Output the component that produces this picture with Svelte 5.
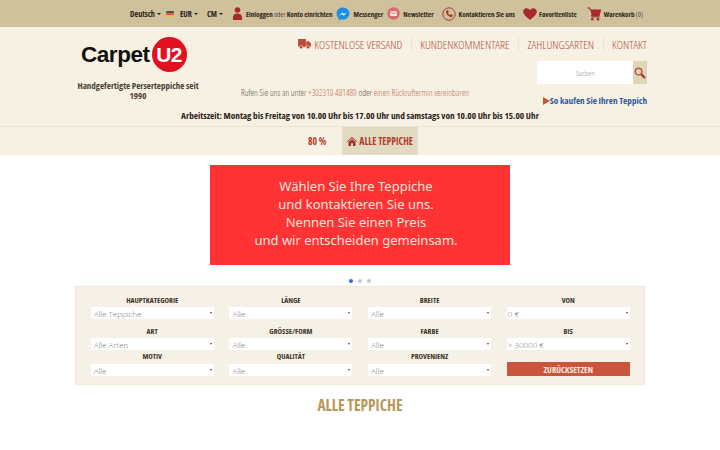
<script lang="ts">
	const topLinks = [
		{ icon: 'messenger', label: 'Messenger' },
		{ icon: 'mail', label: 'Newsletter' },
		{ icon: 'phone', label: 'Kontaktieren Sie uns' },
		{ icon: 'heart', label: 'Favoritenliste' }
	];
	const navLinks = ['KUNDENKOMMENTARE', 'ZAHLUNGSARTEN', 'KONTAKT'];
	const filters = [
		{ label: 'HAUPTKATEGORIE', value: 'Alle Teppiche' },
		{ label: 'LÄNGE', value: 'Alle' },
		{ label: 'BREITE', value: 'Alle' },
		{ label: 'VON', value: '0 €' },
		{ label: 'ART', value: 'Alle Arten' },
		{ label: 'GRÖSSE/FORM', value: 'Alle' },
		{ label: 'FARBE', value: 'Alle' },
		{ label: 'BIS', value: '> 30000 €' },
		{ label: 'MOTIV', value: 'Alle' },
		{ label: 'QUALITÄT', value: 'Alle' },
		{ label: 'PROVENIENZ', value: 'Alle' }
	];
</script>

<div class="page">
	<div class="topbar">
		<span class="drop">Deutsch<i class="caret"></i></span>
		<svg class="flag" width="8" height="6" viewBox="0 0 9 7"><rect width="9" height="2.4" fill="#555"/><rect y="2.3" width="9" height="2.4" fill="#d9534f"/><rect y="4.6" width="9" height="2.4" fill="#e8c04a"/></svg>
		<span class="drop">EUR<i class="caret"></i></span>
		<span class="drop cm">CM<i class="caret"></i></span>
		<span class="link login">
			<svg width="9" height="13" viewBox="0 0 9 13"><circle cx="4.500" cy="3" r="2.800" fill="#a9282a"/><path d="M0 13v-2.500c0-2.500 1.800-4 4.500-4s4.500 1.500 4.500 4V13z" fill="#a9282a"/></svg>
			<span>Einloggen <em>oder</em> Konto einrichten</span>
		</span>
		{#each topLinks as link}
			<span class="link {link.icon}">
				{#if link.icon === 'messenger'}
					<svg width="14" height="14" viewBox="0 0 14 14"><path d="M7 .5C3.300.5.500 3.200.500 6.600c0 1.900.9 3.500 2.300 4.600v2.300l2.200-1.200c.6.200 1.300.3 2 .3 3.700 0 6.500-2.700 6.500-6S10.700.5 7 .5z" fill="#1f8ce6"/><path d="M3.300 8.700 6.300 5.500l1.600 1.600 2.900-1.600-3 3.200-1.600-1.600z" fill="#fff"/></svg>
				{:else if link.icon === 'mail'}
					<svg width="13" height="13" viewBox="0 0 13 13"><circle cx="6.500" cy="6.500" r="6.200" fill="#d96a6a"/><rect x="3" y="4" width="7" height="5" rx="1" fill="#f7e4dc"/><path d="M3.300 4.600 6.500 7l3.200-2.400" fill="none" stroke="#d96a6a" stroke-width=".8"/></svg>
				{:else if link.icon === 'phone'}
					<svg width="14" height="14" viewBox="0 0 14 14"><circle cx="7" cy="7" r="6.200" fill="none" stroke="#a9382f" stroke-width="1"/><path d="M4.600 3.400 6 3l.9 2-.9.800c.3.900 1.100 1.800 2 2.200l.8-.9 2 1-.4 1.400c-.3.600-1 .8-1.700.6C6.300 9.500 4.500 7.500 4 5.300c-.1-.8.100-1.500.6-1.900z" fill="#a9382f"/></svg>
				{:else}
					<svg width="14" height="12" viewBox="0 0 14 12"><path d="M7 12C3.500 9 .2 6.800.2 3.600.2 1.500 1.800.2 3.500.2 5 .2 6.300 1 7 2.200 7.700 1 9 .2 10.500.2c1.700 0 3.300 1.300 3.300 3.400C13.800 6.800 10.500 9 7 12z" fill="#a9282a"/></svg>
				{/if}
				<span>{link.label}</span>
			</span>
		{/each}
		<span class="link cart">
			<svg width="14" height="14" viewBox="0 0 14 14"><path d="M.5 1h2.200l.6 2H13.500l-1.500 5.600H4.700l.4 1.400h7.400" fill="none" stroke="#a9282a" stroke-width="1.100"/><path d="M3.400 3h10.100l-1.500 5.600H4.800z" fill="#a9282a"/><circle cx="5.300" cy="12.300" r="1.300" fill="#a9282a"/><circle cx="11" cy="12.300" r="1.300" fill="#a9282a"/></svg>
			<span>Warenkorb <em>(0)</em></span>
		</span>
	</div>

	<header class="header">
		<div class="brand-row">
			<div class="brand">
				<div class="logo">
					<span class="logo-word">Carpet</span>
					<span class="logo-badge">U2</span>
				</div>
				<p class="tagline">Handgefertigte Perserteppiche seit 1990</p>
			</div>
			<div class="header-main">
				<nav class="nav">
					<span class="nav-item">
						<svg width="13" height="10" viewBox="0 0 14 11"><path d="M0 0h8.500v8.500H0zM9 2.500h2.800L14 5v3.500H9z" fill="#b9483a"/><circle cx="3.300" cy="9" r="1.800" fill="#b9483a" stroke="#f7f1e3" stroke-width=".6"/><circle cx="11" cy="9" r="1.800" fill="#b9483a" stroke="#f7f1e3" stroke-width=".6"/></svg>
						KOSTENLOSE VERSAND
					</span>
					{#each navLinks as item}
						<span class="nav-item">{item}</span>
					{/each}
				</nav>
				<div class="contact-row">
					<p class="call">Rufen Sie uns an unter <span>+302310 481489</span> oder <span>einen Rückruftermin vereinbaren</span></p>
					<div class="side">
						<div class="search">
							<span class="search-input">Suchen</span>
							<span class="search-btn">
								<svg width="12" height="12" viewBox="0 0 12 12"><circle cx="4.600" cy="4.600" r="3.300" fill="none" stroke="#c9553c" stroke-width="1.500"/><path d="M7.200 7.200 11 11" stroke="#a9282a" stroke-width="2"/></svg>
							</span>
						</div>
						<p class="howto"><span class="arrow"></span>So kaufen Sie Ihren Teppich</p>
					</div>
				</div>
			</div>
		</div>
		<p class="hours">Arbeitszeit: Montag bis Freitag von 10.00 Uhr bis 17.00 Uhr und samstags von 10.00 Uhr bis 15.00 Uhr</p>
	</header>

	<div class="catbar">
		<span class="cat">80 %</span>
		<span class="cat active">
			<svg width="10" height="9" viewBox="0 0 10 9"><path d="M5 0 0 4.500l.6.600L5 1.300l4.400 3.800.6-.6zM1.500 5.200V9h2.500V6.300h2V9h2.500V5.200L5 2.200z" fill="#a9282a"/></svg>
			ALLE TEPPICHE
		</span>
	</div>

	<section class="slider">
		<div class="banner">
			<p>Wählen Sie Ihre Teppiche</p>
			<p>und kontaktieren Sie uns.</p>
			<p>Nennen Sie einen Preis</p>
			<p>und wir entscheiden gemeinsam.</p>
		</div>
		<div class="dots">
			<i class="dot on"></i><i class="dot"></i><i class="dot"></i>
		</div>
	</section>

	<section class="filters">
		{#each filters as f}
			<div class="field">
				<span class="field-label">{f.label}</span>
				<div class="select"><span>{f.value}</span><i></i></div>
			</div>
		{/each}
		<div class="field reset-field">
			<button class="reset">ZURÜCKSETZEN</button>
		</div>
	</section>

	<h2 class="title">ALLE TEPPICHE</h2>
</div>

<style>
	:global(body) {
		margin: 0;
		background: #fff;
	}

	.page {
		width: 720px;
		height: 450px;
		overflow: hidden;
		font-family: 'Open Sans', 'Liberation Sans', sans-serif;
		font-stretch: 75%;
	}

	p {
		margin: 0;
	}

	.topbar {
		height: 27px;
		background: #cfc19b;
		display: flex;
		align-items: center;
		padding-left: 130px;
		font-size: 7.100px;
		font-weight: 700;
		color: #2b2118;
		white-space: nowrap;
		box-sizing: border-box;
	}

	.drop {
		display: inline-flex;
		align-items: center;
		font-size: 8px;
	}

	.caret {
		display: inline-block;
		margin-left: 2px;
		border-left: 2px solid transparent;
		border-right: 2px solid transparent;
		border-top: 2px solid #2b2118;
	}

	.flag {
		margin: 0 6px 0 5px;
	}

	.cm {
		margin-left: 9px;
	}

	.link {
		display: inline-flex;
		align-items: center;
		gap: 3px;
		margin-left: 4px;
	}

	.login {
		margin-left: 10px;
		gap: 4px;
	}

	.messenger {
		margin-left: 4px;
	}

	.phone {
		margin-left: 8px;
	}

	.heart {
		margin-left: 8px;
		gap: 2px;
	}

	.cart {
		margin-left: 10px;
		gap: 3px;
	}

	.topbar em {
		font-style: normal;
		font-weight: 400;
		color: #4a4a44;
	}

	.header {
		height: 100px;
		background: #f7f1e3;
		border-bottom: 1px solid #ebe4d2;
		box-sizing: border-box;
		display: flex;
		flex-direction: column;
	}

	.brand-row {
		display: flex;
		height: 82px;
		padding-left: 72px;
		padding-right: 73px;
	}

	.brand {
		width: 132px;
		flex: none;
		padding-top: 10px;
		box-sizing: border-box;
	}

	.logo {
		display: flex;
		align-items: center;
		height: 35px;
		padding-left: 9px;
	}

	.logo-word {
		font-family: 'Liberation Sans', sans-serif;
		font-stretch: normal;
		font-size: 22.500px;
		font-weight: 700;
		letter-spacing: -0.45px;
		color: #111;
	}

	.logo-badge {
		width: 35px;
		height: 35px;
		margin-left: 2px;
		flex: none;
		border-radius: 50%;
		background: #e2111f;
		color: #fff;
		font-family: 'Liberation Sans', sans-serif;
		font-stretch: normal;
		font-size: 21px;
		font-weight: 700;
		letter-spacing: -0.5px;
		display: flex;
		align-items: center;
		justify-content: center;
	}

	.tagline {
		margin-top: 9px;
		font-size: 9px;
		line-height: 10px;
		font-weight: 700;
		color: #4a4036;
		text-align: center;
	}

	.header-main {
		flex: 1;
		display: flex;
		flex-direction: column;
	}

	.nav {
		display: flex;
		justify-content: flex-end;
		padding-top: 8px;
		height: 26px;
		box-sizing: border-box;
	}

	.nav-item {
		display: inline-flex;
		align-items: center;
		gap: 3px;
		height: 18px;
		padding: 0 8.500px;
		border-left: 1px solid #ebe4d2;
		font-size: 11.750px;
		font-weight: 300;
		color: #b0503f;
		white-space: nowrap;
	}

	.nav-item:first-child {
		border-left: 0;
	}

	.nav-item:last-child {
		padding-right: 0;
	}

	.contact-row {
		display: flex;
		justify-content: space-between;
		padding-left: 37px;
	}

	.call {
		margin-top: 33px;
		font-size: 8.900px;
		font-weight: 300;
		color: #5e5346;
		white-space: nowrap;
	}

	.call span {
		color: #bd6a58;
	}

	.side {
		display: flex;
		flex-direction: column;
		align-items: flex-end;
		padding-top: 8px;
	}

	.search {
		display: flex;
		height: 23px;
		width: 110px;
	}

	.search-input {
		flex: 1;
		background: #fff;
		font-size: 8px;
		font-weight: 300;
		color: #8f8f8f;
		text-align: center;
		line-height: 23px;
	}

	.search-btn {
		width: 14px;
		background: #dfd5bb;
		display: flex;
		align-items: center;
		justify-content: center;
	}

	.howto {
		margin-top: 10px;
		font-size: 9.200px;
		font-weight: 700;
		color: #2f5aa0;
		display: flex;
		align-items: center;
		white-space: nowrap;
	}

	.arrow {
		border-left: 7px solid #c9553c;
		border-top: 4px solid transparent;
		border-bottom: 4px solid transparent;
	}

	.hours {
		font-size: 9.270px;
		font-weight: 700;
		color: #2b2118;
		text-align: center;
		white-space: nowrap;
	}

	.catbar {
		height: 28px;
		background: #f7f1e3;
		display: flex;
		justify-content: center;
		padding-right: 2px;
	}

	.cat {
		display: flex;
		align-items: center;
		gap: 2px;
		padding: 0 8px;
		font-size: 9.700px;
		font-weight: 700;
		color: #b23a2c;
		white-space: nowrap;
		margin-right: 8px;
	}

	.cat.active {
		background: #e3dac3;
		margin-right: 0;
		padding: 0 5px;
	}

	.slider {
		padding-top: 10px;
		display: flex;
		flex-direction: column;
		align-items: center;
	}

	.banner {
		width: 300px;
		height: 100px;
		background: #ff3333;
		color: #fde4dc;
		box-sizing: border-box;
		padding: 12px 8px 0 0;
		text-align: center;
		font-family: 'Noto Sans', sans-serif;
		font-stretch: normal;
		font-size: 13px;
		line-height: 18px;
	}

	.dots {
		display: flex;
		gap: 5px;
		height: 21px;
		align-items: center;
		padding-top: 11px;
		box-sizing: border-box;
	}

	.dot {
		width: 4px;
		height: 4px;
		border-radius: 50%;
		background: #c4c9d2;
	}

	.dot.on {
		background: #2a6fd0;
	}

	.filters {
		width: 570px;
		height: 99px;
		margin: 0 auto;
		box-sizing: border-box;
		background: #f5f1e7;
		border: 1px solid #eee8d9;
		padding: 8px 14.700px 0;
		display: grid;
		grid-template-columns: repeat(4, 123px);
		column-gap: 15.700px;
		grid-template-rows: 31px 25px 25px;
	}

	.field {
		display: flex;
		flex-direction: column;
		align-items: center;
	}

	.field:nth-child(n + 9) .field-label {
		margin-bottom: 3px;
	}

	.field-label {
		font-size: 7.600px;
		line-height: 10px;
		font-weight: 700;
		color: #3b3127;
		margin-bottom: 2px;
		white-space: nowrap;
	}

	.select {
		width: 100%;
		height: 12px;
		background: #fff;
		display: flex;
		justify-content: space-between;
		align-items: center;
		padding: 0 2px 0 3px;
		box-sizing: border-box;
		font-stretch: 90%;
		font-size: 8px;
		font-weight: 300;
		color: #777;
	}

	.field:nth-child(4n) .select {
		font-stretch: normal;
		padding-left: 1px;
	}

	.select i {
		border-left: 1.500px solid transparent;
		border-right: 1.500px solid transparent;
		border-top: 2px solid #8a2a3a;
	}

	.reset-field {
		justify-content: flex-end;
	}

	.reset {
		width: 100%;
		height: 14px;
		padding: 0;
		border: 0;
		background: #c9553c;
		color: #fbeadf;
		font-family: inherit;
		font-stretch: 75%;
		font-size: 8.500px;
		font-weight: 700;
	}

	.title {
		margin: 11px 0 0;
		text-align: center;
		font-size: 15.400px;
		line-height: 20px;
		font-weight: 700;
		color: #b8975a;
	}
</style>
